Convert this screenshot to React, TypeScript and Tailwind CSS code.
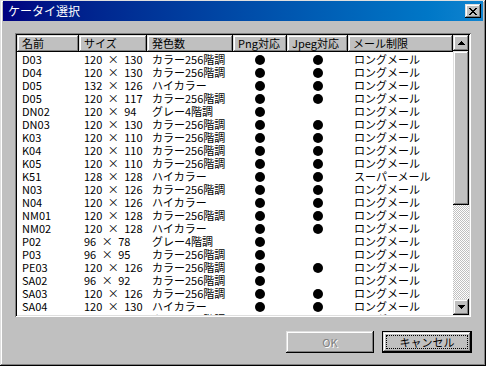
type Row = {
  name: string;
  size: string;
  color: string;
  png: boolean;
  jpeg: boolean;
  mail: string;
};

const rows: Row[] = [
  { name: "D03", size: "120 × 130", color: "カラー256階調", png: true, jpeg: true, mail: "ロングメール" },
  { name: "D04", size: "120 × 130", color: "カラー256階調", png: true, jpeg: true, mail: "ロングメール" },
  { name: "D05", size: "132 × 126", color: "ハイカラー", png: true, jpeg: true, mail: "ロングメール" },
  { name: "D05", size: "120 × 117", color: "カラー256階調", png: true, jpeg: true, mail: "ロングメール" },
  { name: "DN02", size: "120 × 94", color: "グレー4階調", png: true, jpeg: false, mail: "ロングメール" },
  { name: "DN03", size: "120 × 130", color: "カラー256階調", png: true, jpeg: true, mail: "ロングメール" },
  { name: "K03", size: "120 × 110", color: "カラー256階調", png: true, jpeg: true, mail: "ロングメール" },
  { name: "K04", size: "120 × 110", color: "カラー256階調", png: true, jpeg: true, mail: "ロングメール" },
  { name: "K05", size: "120 × 110", color: "カラー256階調", png: true, jpeg: true, mail: "ロングメール" },
  { name: "K51", size: "128 × 128", color: "ハイカラー", png: true, jpeg: true, mail: "スーパーメール" },
  { name: "N03", size: "120 × 126", color: "カラー256階調", png: true, jpeg: true, mail: "ロングメール" },
  { name: "N04", size: "120 × 126", color: "ハイカラー", png: true, jpeg: true, mail: "ロングメール" },
  { name: "NM01", size: "120 × 128", color: "カラー256階調", png: true, jpeg: true, mail: "ロングメール" },
  { name: "NM02", size: "120 × 128", color: "ハイカラー", png: true, jpeg: true, mail: "ロングメール" },
  { name: "P02", size: "96 × 78", color: "グレー4階調", png: true, jpeg: false, mail: "ロングメール" },
  { name: "P03", size: "96 × 95", color: "カラー256階調", png: true, jpeg: false, mail: "ロングメール" },
  { name: "PE03", size: "120 × 126", color: "カラー256階調", png: true, jpeg: true, mail: "ロングメール" },
  { name: "SA02", size: "96 × 92", color: "カラー256階調", png: true, jpeg: false, mail: "ロングメール" },
  { name: "SA03", size: "120 × 126", color: "カラー256階調", png: true, jpeg: true, mail: "ロングメール" },
  { name: "SA04", size: "120 × 130", color: "ハイカラー", png: true, jpeg: true, mail: "ロングメール" },
  { name: "SH03", size: "96 × 48", color: "カラー256階調", png: true, jpeg: false, mail: "ロングメール" },
];

const raised =
  "bg-[#c0c0c0] shadow-[inset_-1px_-1px_0_#000,inset_1px_1px_0_#dfdfdf,inset_-2px_-2px_0_#808080,inset_2px_2px_0_#fff]";

function Dot() {
  return <div className="w-[10px] h-[10px] rounded-full bg-black" />;
}

// pixel arrow for scrollbar buttons
function Arrow({ down }: { down?: boolean }) {
  const widths = down ? [7, 5, 3, 1] : [1, 3, 5, 7];
  return (
    <svg width="7" height="4" shapeRendering="crispEdges">
      {widths.map((w, i) => (
        <rect key={i} x={(7 - w) / 2} y={i} width={w} height={1} fill="#000" />
      ))}
    </svg>
  );
}

function CloseGlyph() {
  const px = [
    [0, 0], [1, 0], [6, 0], [7, 0],
    [1, 1], [2, 1], [5, 1], [6, 1],
    [2, 2], [3, 2], [4, 2], [5, 2],
    [3, 3], [4, 3],
    [2, 4], [3, 4], [4, 4], [5, 4],
    [1, 5], [2, 5], [5, 5], [6, 5],
    [0, 6], [1, 6], [6, 6], [7, 6],
  ];
  return (
    <svg width="8" height="7" shapeRendering="crispEdges">
      {px.map(([x, y], i) => (
        <rect key={i} x={x} y={y} width={1} height={1} fill="#000" />
      ))}
    </svg>
  );
}

function HeaderCell({ label, width }: { label: string; width: string }) {
  return (
    <div className={`${width} ${raised} h-full pl-[5px] leading-[17px] whitespace-nowrap overflow-hidden`}>
      {label}
    </div>
  );
}

function App() {
  return (
    <div
      className={`w-[486px] h-[366px] flex flex-col px-[3px] pt-[1px] text-[11px] text-black font-['Noto_Sans_CJK_JP',sans-serif] ${raised}`}
    >
      {/* title bar */}
      <div className="h-[20px] flex items-center justify-between pl-[5px] pr-[2px] bg-gradient-to-r from-[#000080] to-[#1084d0]">
        <span className="text-white text-[12px] leading-none">ケータイ選択</span>
        <button className={`w-[16px] h-[14px] flex items-center justify-center ${raised}`}>
          <CloseGlyph />
        </button>
      </div>

      <div className="flex-1 flex flex-col pl-[12px] pr-[11px] pt-[12px]">
        {/* list view */}
        <div className="w-[456px] h-[284px] p-[2px] bg-white flex shadow-[inset_1px_1px_0_#808080,inset_-1px_-1px_0_#fff,inset_2px_2px_0_#000,inset_-2px_-2px_0_#dfdfdf]">
          <div className="flex-1 flex flex-col overflow-hidden">
            <div className="h-[17px] flex shrink-0">
              <HeaderCell label="名前" width="w-[62px]" />
              <HeaderCell label="サイズ" width="w-[68px]" />
              <HeaderCell label="発色数" width="w-[86px]" />
              <HeaderCell label="Png対応" width="w-[54px]" />
              <HeaderCell label="Jpeg対応" width="w-[61px]" />
              <HeaderCell label="メール制限" width="w-[105px]" />
            </div>
            <div className="flex flex-col pt-[1px]">
              {rows.map((r, i) => (
                <div key={i} className="h-[13px] flex leading-[13px] whitespace-nowrap shrink-0">
                  <div className="w-[62px] pl-[5px] overflow-hidden">{r.name}</div>
                  <div className="w-[68px] pl-[5px] overflow-hidden [word-spacing:3px]">{r.size}</div>
                  <div className="w-[86px] pl-[5px] overflow-hidden">{r.color}</div>
                  <div className="w-[54px] flex items-center justify-center">{r.png && <Dot />}</div>
                  <div className="w-[61px] flex items-center justify-center">{r.jpeg && <Dot />}</div>
                  <div className="w-[105px] pl-[6px] overflow-hidden">{r.mail}</div>
                </div>
              ))}
            </div>
          </div>

          {/* scrollbar */}
          <div className="w-[16px] flex flex-col">
            <div className={`h-[16px] flex items-center justify-center ${raised}`}>
              <Arrow />
            </div>
            <div className={`h-[154px] ${raised}`} />
            <div className="flex-1 bg-[repeating-conic-gradient(#fff_0%_25%,#c0c0c0_0%_50%)] bg-[length:2px_2px]" />
            <div className={`h-[16px] flex items-center justify-center ${raised}`}>
              <Arrow down />
            </div>
          </div>
        </div>

        {/* buttons */}
        <div className="flex justify-end gap-[8px] mt-[14px]">
          <button
            disabled
            className={`w-[88px] h-[22px] text-[#808080] [text-shadow:1px_1px_0_#fff] ${raised}`}
          >
            OK
          </button>
          <button className="w-[90px] h-[22px] border border-black p-0">
            <div className={`w-full h-full flex items-center justify-center p-[3px] ${raised}`}>
              <div className="w-full h-full flex items-center justify-center border border-dotted border-black leading-none">
                キャンセル
              </div>
            </div>
          </button>
        </div>
      </div>
    </div>
  );
}

export default App;
